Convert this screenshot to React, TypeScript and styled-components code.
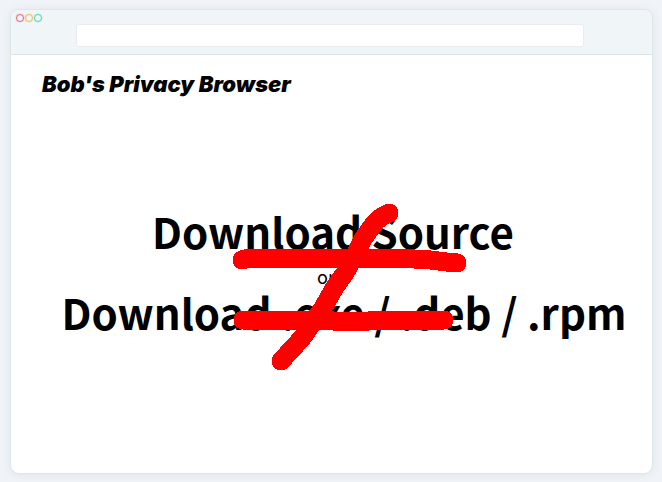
import React from "react";
import styled, { createGlobalStyle } from "styled-components";

const GlobalStyle = createGlobalStyle`
  * { box-sizing: border-box; }
  body { margin: 0; background: #f0f4f8; color: #000; }
`;

const Desktop = styled.div`
  display: flex;
  min-height: 100vh;
  padding: 10px 10px 9px 11px;
`;

const BrowserWindow = styled.main`
  flex: 1;
  display: flex;
  flex-direction: column;
  min-width: 0;
  overflow: hidden;
  background: #fff;
  border-radius: 8px;
  box-shadow: 0 0 0 1px #dfe6ea, 0 1px 10px rgba(60, 90, 105, 0.12);
`;

const Toolbar = styled.header`
  display: grid;
  grid-template-columns: 66px 1fr 69px;
  align-items: start;
  height: 45px;
  border-bottom: 1px solid #dce2e6;
  background: #f0f5f8;
`;

const WindowControls = styled.div`
  display: flex;
  gap: 1px;
  padding: 4px 0 0 5px;
`;

const ControlDot = styled.button<{ $color: string }>`
  width: 8px;
  height: 8px;
  padding: 0;
  border: 1px solid ${(p) => p.$color};
  border-radius: 50%;
  background: transparent;
  box-shadow: 0 0 1px ${(p) => p.$color};
`;

const AddressBar = styled.input`
  width: 100%;
  height: 21px;
  margin-top: 15px;
  padding: 0 8px;
  border: 0;
  border-radius: 2px;
  outline: 0;
  background: #fff;
  box-shadow: 0 0 1px 1px #e8edf0;
  font: 13px "Noto Sans", sans-serif;
`;

const Page = styled.section`
  flex: 1;
  padding: 13px 6px 0 31px;
`;

const Title = styled.h1`
  margin: 0;
  font: italic 900 22px/32px Inter, sans-serif;
  white-space: nowrap;
`;

const Choices = styled.div`
  position: relative;
  display: flex;
  flex-direction: column;
  align-items: center;
  width: max-content;
  margin: 103px auto 0;
  font-family: "Noto Sans CJK JP", "Noto Sans", sans-serif;
  white-space: nowrap;
`;

const Choice = styled.h2<{ $inset?: number }>`
  margin: 0;
  padding-right: ${(p) => p.$inset ?? 0}px;
  font-size: 42px;
  font-weight: 700;
  line-height: 56px;
`;

const Conjunction = styled.p`
  margin: 0;
  padding: 9px 36px 0 0;
  font-size: 18px;
  line-height: 16px;
`;

const Strike = styled.svg`
  position: absolute;
  top: 0;
  left: 170px;
  width: 240px;
  height: 180px;
  fill: none;
  stroke: #f00;
  stroke-width: 19px;
  stroke-linecap: round;
  stroke-linejoin: round;
  pointer-events: none;
`;

const controls = [
  { label: "Close", color: "#e6607e" },
  { label: "Minimize", color: "#edbd4e" },
  { label: "Maximize", color: "#4bd3bf" },
];

export default function App() {
  return (
    <>
      <GlobalStyle />
      <Desktop>
        <BrowserWindow>
          <Toolbar>
            <WindowControls>
              {controls.map((c) => (
                <ControlDot key={c.label} $color={c.color} aria-label={c.label} />
              ))}
            </WindowControls>
            <AddressBar type="text" aria-label="Address" />
          </Toolbar>
          <Page>
            <Title>Bob's Privacy Browser</Title>
            <Choices>
              <Choice $inset={22}>Download Source</Choice>
              <Conjunction>or</Conjunction>
              <Choice>Download .exe / .deb / .rpm</Choice>
              <Strike viewBox="232 203 240 180" shapeRendering="crispEdges" aria-hidden="true">
                <path d="M242 260Q247 258 254 258H380Q406 258 431 260Q444 262 457 263" />
                <path d="M389 213Q379 217 373 225L363 239L354 257L345 273L335 287L323 308L302 338L281 361" />
                <path d="M243 320H325Q350 324 378 320H444" />
              </Strike>
            </Choices>
          </Page>
        </BrowserWindow>
      </Desktop>
    </>
  );
}
